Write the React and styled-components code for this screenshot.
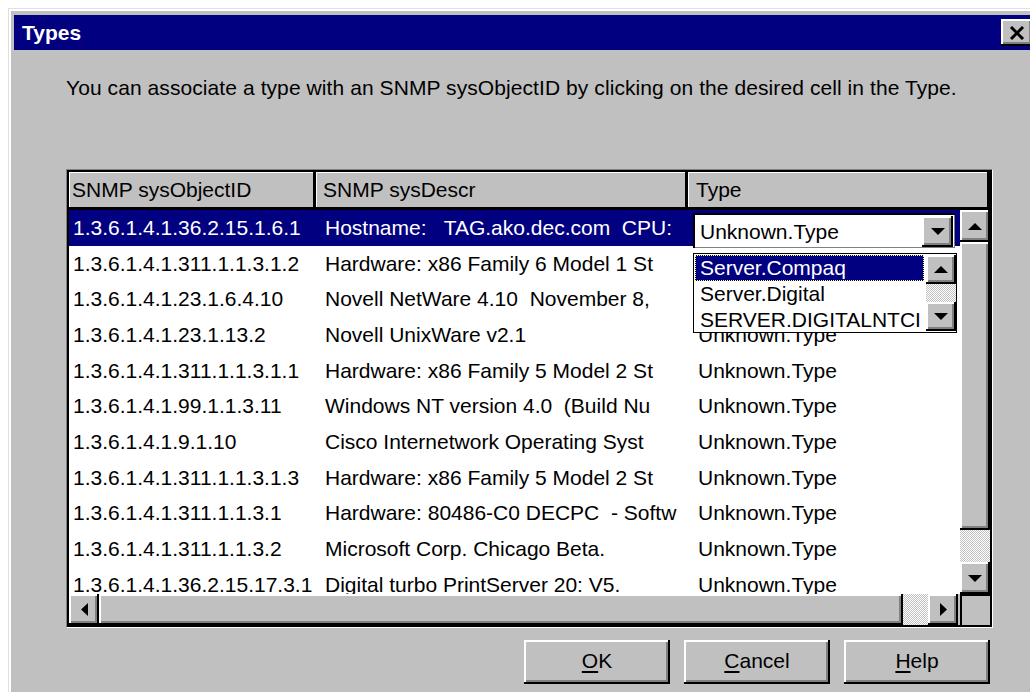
import React from "react";
import styled, { createGlobalStyle, css } from "styled-components";

const rows = [
  ["1.3.6.1.4.1.36.2.15.1.6.1", "Hostname:   TAG.ako.dec.com  CPU:", "Unknown.Type"],
  ["1.3.6.1.4.1.311.1.1.3.1.2", "Hardware: x86 Family 6 Model 1 St", "Unknown.Type"],
  ["1.3.6.1.4.1.23.1.6.4.10", "Novell NetWare 4.10  November 8,", "Unknown.Type"],
  ["1.3.6.1.4.1.23.1.13.2", "Novell UnixWare v2.1", "Unknown.Type"],
  ["1.3.6.1.4.1.311.1.1.3.1.1", "Hardware: x86 Family 5 Model 2 St", "Unknown.Type"],
  ["1.3.6.1.4.1.99.1.1.3.11", "Windows NT version 4.0  (Build Nu", "Unknown.Type"],
  ["1.3.6.1.4.1.9.1.10", "Cisco Internetwork Operating Syst", "Unknown.Type"],
  ["1.3.6.1.4.1.311.1.1.3.1.3", "Hardware: x86 Family 5 Model 2 St", "Unknown.Type"],
  ["1.3.6.1.4.1.311.1.1.3.1", "Hardware: 80486-C0 DECPC  - Softw", "Unknown.Type"],
  ["1.3.6.1.4.1.311.1.1.3.2", "Microsoft Corp. Chicago Beta.", "Unknown.Type"],
  ["1.3.6.1.4.1.36.2.15.17.3.1", "Digital turbo PrintServer 20: V5.", "Unknown.Type"],
];

const typeChoices = ["Server.Compaq", "Server.Digital", "SERVER.DIGITALNTCI"];

// rows whose Type cell sits under the open combo / drop list
const coveredRows = [0, 1, 2];

const GlobalStyle = createGlobalStyle`
  html, body {
    margin: 0;
    padding: 0;
    background: #fff;
    overflow: hidden;
  }
  body {
    font-family: "Liberation Sans", Arial, sans-serif;
    font-size: 21px;
    color: #000;
  }
`;

const raised = css`
  background: #c0c0c0;
  box-shadow: inset -2px -2px 0 #000, inset 2px 2px 0 #fff,
    inset -4px -4px 0 #808080;
`;

const dither = css`
  background: repeating-conic-gradient(#fff 0 25%, #c0c0c0 0 50%) 0 0 / 2px 2px;
`;

const Window = styled.div`
  margin: 9px 0 0 9px;
  width: 1030px;
  height: 700px;
  box-sizing: border-box;
  padding: 4px 3px 0 3px;
  background: #c0c0c0;
  border-top: 2px solid #fff;
  border-left: 2px solid #fff;
  box-shadow: -1px -1px 0 #dfdfdf;
`;

const TitleBar = styled.div`
  height: 35px;
  background: #000080;
  display: flex;
  align-items: center;
  justify-content: space-between;
  padding-left: 8px;
`;

const Title = styled.span`
  color: #fff;
  font-weight: bold;
  font-size: 21px;
`;

const CloseBox = styled.div`
  ${raised};
  width: 32px;
  height: 27px;
  margin-right: 3px;
  display: flex;
  align-items: center;
  justify-content: center;
`;

const Content = styled.div`
  padding-left: 52px;
`;

const Intro = styled.p`
  margin: 26px 0 0;
  line-height: 24px;
  letter-spacing: 0.08px;
  white-space: nowrap;
`;

const GridFrame = styled.div`
  margin-top: 69px;
  width: 927px;
  box-sizing: border-box;
  border-top: 1px solid #808080;
  border-left: 1px solid #808080;
  border-right: 1px solid #fff;
  border-bottom: 1px solid #fff;
`;

const Grid = styled.div`
  border: 2px solid #000;
  display: grid;
  grid-template-columns: 247px 372px 272px 30px;
  grid-template-rows: 38px 384px 31px;
  background: #c0c0c0;
`;

const HeaderCell = styled.div`
  grid-column: ${(p) => p.$span || "auto"};
  display: flex;
  align-items: center;
  padding: 0 0 3px ${(p) => p.$pad}px;
  background: #c0c0c0;
  box-shadow: inset -3px -3px 0 #000, inset 1px 1px 0 #fff;
  white-space: nowrap;
  overflow: hidden;
`;

const RowArea = styled.div`
  grid-column: 1 / 4;
  position: relative;
  overflow: hidden;
  background: #fff;
`;

const Row = styled.div`
  display: grid;
  grid-template-columns: 247px 372px 272px;
  height: 35.7px;
  align-items: center;
  background: ${(p) => (p.$selected ? "#000080" : "transparent")};
  color: ${(p) => (p.$selected ? "#fff" : "#000")};
`;

const Cell = styled.div`
  padding-left: ${(p) => p.$pad}px;
  white-space: pre;
  overflow: hidden;
`;

const ScrollCol = styled.div`
  display: flex;
  flex-direction: column;
`;

const ScrollRow = styled.div`
  grid-column: 1 / 4;
  display: flex;
  padding-right: 2px;
`;

const ScrollButton = styled.div`
  ${raised};
  flex: none;
  width: ${(p) => p.$w || 30}px;
  height: ${(p) => p.$h || 31}px;
  display: flex;
  align-items: center;
  justify-content: center;
`;

const Thumb = styled.div`
  ${raised};
  flex: none;
  width: ${(p) => (p.$w ? `${p.$w}px` : "auto")};
  height: ${(p) => (p.$h ? `${p.$h}px` : "auto")};
`;

const Track = styled.div`
  ${dither};
  flex: 1;
`;

const Corner = styled.div`
  background: #c0c0c0;
  box-shadow: inset 2px 2px 0 #000;
`;

/* in-place editor for the Type cell of the selected row */
const Combo = styled.div`
  position: absolute;
  left: 624px;
  top: 3px;
  width: 262px;
  height: 35px;
  box-sizing: border-box;
  background: #fff;
  box-shadow: inset 2px 2px 0 #000, inset -1px -1px 0 #808080;
  display: flex;
  align-items: center;
  justify-content: space-between;
  padding: 2px 2px 0 7px;
  color: #000;
`;

const DropList = styled.div`
  position: absolute;
  left: 624px;
  top: 43px;
  width: 264px;
  height: 80px;
  box-sizing: border-box;
  border: 1px solid #000;
  background: #fff;
  display: flex;
  color: #000;
`;

const Items = styled.div`
  flex: 1;
  padding: 1px 2px 0 1px;
`;

const Item = styled.div`
  height: 26px;
  line-height: 25px;
  padding-left: 5px;
  white-space: nowrap;
  overflow: hidden;
  background: ${(p) => (p.$active ? "#000080" : "transparent")};
  color: ${(p) => (p.$active ? "#fff" : "#000")};
  outline: ${(p) => (p.$active ? "1px dotted #ffff60" : "none")};
  outline-offset: -1px;
`;

const ListScroll = styled.div`
  width: 30px;
  display: flex;
  flex-direction: column;
  padding: 1px 0;
`;

const ButtonRow = styled.div`
  width: 926px;
  margin-top: 12px;
  display: flex;
  justify-content: flex-end;
  gap: 14px;
  padding-right: 2px;
  box-sizing: border-box;
`;

const Button = styled.button`
  ${raised};
  width: 146px;
  height: 44px;
  border: none;
  padding: 0 0 2px;
  font-family: inherit;
  font-size: 21px;
  color: #000;
  u {
    text-underline-offset: 3px;
  }
`;

const Arrow = ({ dir }) => {
  const shapes = {
    up: ["14", "7", "0,7 7,0 14,7"],
    down: ["14", "7", "0,0 14,0 7,7"],
    left: ["7", "13", "7,0 7,13 0,6.5"],
    right: ["7", "13", "0,0 0,13 7,6.5"],
  };
  const [w, h, pts] = shapes[dir];
  return (
    <svg width={w} height={h} viewBox={`0 0 ${w} ${h}`}>
      <polygon points={pts} fill="#000" />
    </svg>
  );
};

const CloseGlyph = () => (
  <svg width="16" height="14" viewBox="0 0 16 14">
    <path d="M2 1 L14 13 M14 1 L2 13" stroke="#000" strokeWidth="3" />
  </svg>
);

export default function App() {
  return (
    <>
      <GlobalStyle />
      <Window>
        <TitleBar>
          <Title>Types</Title>
          <CloseBox>
            <CloseGlyph />
          </CloseBox>
        </TitleBar>
        <Content>
          <Intro>
            You can associate a type with an SNMP sysObjectID by clicking on
            the desired cell in the Type.
          </Intro>
          <GridFrame>
            <Grid>
              <HeaderCell $pad={3}>SNMP sysObjectID</HeaderCell>
              <HeaderCell $pad={7}>SNMP sysDescr</HeaderCell>
              <HeaderCell $pad={8} $span="3 / 5">
                Type
              </HeaderCell>
              <RowArea>
                {rows.map(([id, descr, type], i) => (
                  <Row key={id} $selected={i === 0}>
                    <Cell $pad={4}>{id}</Cell>
                    <Cell $pad={9}>{descr}</Cell>
                    <Cell $pad={10}>{coveredRows.includes(i) ? "" : type}</Cell>
                  </Row>
                ))}
                <Combo>
                  <span>Unknown.Type</span>
                  <ScrollButton $w={31} $h={31}>
                    <Arrow dir="down" />
                  </ScrollButton>
                </Combo>
                <DropList>
                  <Items>
                    {typeChoices.map((t, i) => (
                      <Item key={t} $active={i === 0}>
                        {t}
                      </Item>
                    ))}
                  </Items>
                  <ListScroll>
                    <ScrollButton $h={29}>
                      <Arrow dir="up" />
                    </ScrollButton>
                    <Track />
                    <ScrollButton $h={29}>
                      <Arrow dir="down" />
                    </ScrollButton>
                  </ListScroll>
                </DropList>
              </RowArea>
              <ScrollCol>
                <ScrollButton $h={32}>
                  <Arrow dir="up" />
                </ScrollButton>
                <Thumb $h={288} />
                <Track />
                <ScrollButton $h={32}>
                  <Arrow dir="down" />
                </ScrollButton>
              </ScrollCol>
              <ScrollRow>
                <ScrollButton>
                  <Arrow dir="left" />
                </ScrollButton>
                <Thumb $w={804} />
                <Track />
                <ScrollButton>
                  <Arrow dir="right" />
                </ScrollButton>
              </ScrollRow>
              <Corner />
            </Grid>
          </GridFrame>
          <ButtonRow>
            <Button>
              <u>O</u>K
            </Button>
            <Button>
              <u>C</u>ancel
            </Button>
            <Button>
              <u>H</u>elp
            </Button>
          </ButtonRow>
        </Content>
      </Window>
    </>
  );
}
